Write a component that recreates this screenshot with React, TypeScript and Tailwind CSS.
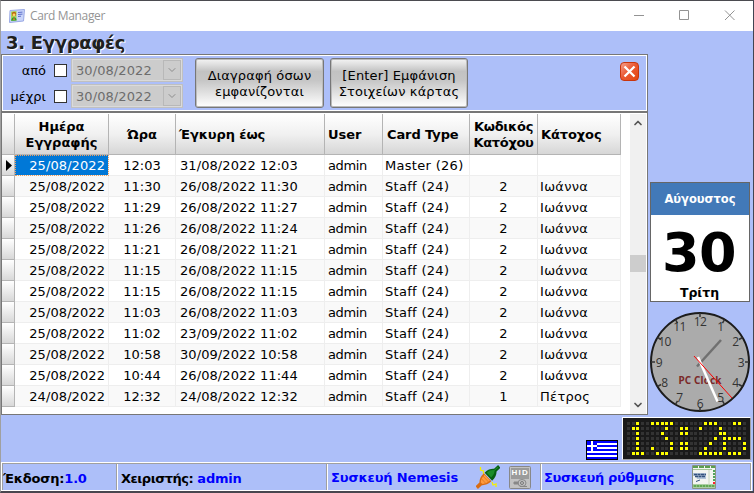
import React, { useState } from "react";
import { ChevronDown, ChevronUp } from "lucide-react";

interface CardRecord {
  date: string;
  time: string;
  validUntil: string;
  user: string;
  cardType: string;
  ownerCode: string;
  owner: string;
}

const records: CardRecord[] = [
  { date: "25/08/2022", time: "12:03", validUntil: "31/08/2022 12:03", user: "admin", cardType: "Master (26)", ownerCode: "", owner: "" },
  { date: "25/08/2022", time: "11:30", validUntil: "26/08/2022 11:30", user: "admin", cardType: "Staff (24)", ownerCode: "2", owner: "Ιωάννα" },
  { date: "25/08/2022", time: "11:29", validUntil: "26/08/2022 11:27", user: "admin", cardType: "Staff (24)", ownerCode: "2", owner: "Ιωάννα" },
  { date: "25/08/2022", time: "11:26", validUntil: "26/08/2022 11:24", user: "admin", cardType: "Staff (24)", ownerCode: "2", owner: "Ιωάννα" },
  { date: "25/08/2022", time: "11:21", validUntil: "26/08/2022 11:21", user: "admin", cardType: "Staff (24)", ownerCode: "2", owner: "Ιωάννα" },
  { date: "25/08/2022", time: "11:15", validUntil: "26/08/2022 11:15", user: "admin", cardType: "Staff (24)", ownerCode: "2", owner: "Ιωάννα" },
  { date: "25/08/2022", time: "11:15", validUntil: "26/08/2022 11:15", user: "admin", cardType: "Staff (24)", ownerCode: "2", owner: "Ιωάννα" },
  { date: "25/08/2022", time: "11:03", validUntil: "26/08/2022 11:03", user: "admin", cardType: "Staff (24)", ownerCode: "2", owner: "Ιωάννα" },
  { date: "25/08/2022", time: "11:02", validUntil: "23/09/2022 11:02", user: "admin", cardType: "Staff (24)", ownerCode: "2", owner: "Ιωάννα" },
  { date: "25/08/2022", time: "10:58", validUntil: "30/09/2022 10:58", user: "admin", cardType: "Staff (24)", ownerCode: "2", owner: "Ιωάννα" },
  { date: "25/08/2022", time: "10:44", validUntil: "26/08/2022 11:44", user: "admin", cardType: "Staff (24)", ownerCode: "2", owner: "Ιωάννα" },
  { date: "24/08/2022", time: "12:32", validUntil: "24/08/2022 12:32", user: "admin", cardType: "Staff (24)", ownerCode: "1", owner: "Πέτρος" }
];

const gridColumns = "grid grid-cols-[13px_94px_67px_149px_58px_87px_68px_83px]";

// 25 x 7 dot matrix reading of the digital clock
const ledRows = [
  "..#..#####......###...##.",
  ".##.....#..##..#...#.....",
  "..#....#...##......##....",
  "..#.....#.........#.####.",
  "..#......#.##....#..#...#",
  "..#..#...#.##...#...#...#",
  ".###..###......#####.###."
];

function AppIcon() {
  return (
    <svg className="w-4 h-[14px]" viewBox="0 0 16 14">
      <path d="M1 1.5 15.5.5 14.5 12 .5 13.5z" fill="#c9d5fa" stroke="#9aa9e4" />
      <path d="M2 2.5 7.5 2v9.5L2 12z" fill="#a8d65a" />
      <circle cx="5" cy="5" r="2.2" fill="#b9690e" />
      <circle cx="5" cy="5.8" r="1.4" fill="#ffd36b" />
      <path d="M2.2 11.7c0-4.6 5.4-4.6 5.4-.3z" fill="#2f9a35" />
      <path d="M5 8l1 3H4z" fill="#f07a20" />
      <path d="M9 3.5l4.5-.4M9 5.5l4.5-.4M9 7.5l3-.3" stroke="#5d6fca" />
    </svg>
  );
}

function TitleBar() {
  return (
    <div className="h-[30px] bg-white flex items-center shrink-0">
      <div className="w-[29px] pl-2">
        <AppIcon />
      </div>
      <span className="font-['Open_Sans',sans-serif] text-[12px] tracking-[-0.35px] leading-none text-[#949494] flex-1">
        Card Manager
      </span>
      <svg className="w-[119px] h-[30px]" viewBox="0 0 119 30" fill="none" stroke="#939393">
        <path d="M0 14.5h10" />
        <path d="M45.5 9.5h9v9h-9z" />
        <path d="M91 9.5l9.5 9.5M100.500 9.500 91 19" />
      </svg>
    </div>
  );
}

function DateFilter({ label }: { label: string }) {
  const [enabled, setEnabled] = useState(false);

  return (
    <div className="h-[26px] flex items-center">
      <span className="w-[43px] text-right leading-none">{label}</span>
      <button
        onClick={() => setEnabled(!enabled)}
        className="w-[13px] h-[13px] ml-2 bg-white border border-[#333333] text-[9px] leading-none"
      >
        {enabled ? "✓" : ""}
      </button>
      <div className="w-[112px] h-6 ml-1 bg-[#cccccc] border border-[#c0c0c0] outline -outline-offset-2 outline-[#dadada] flex items-center text-[#6d6d6d]">
        <span className="flex-1 pl-1 leading-none tracking-[0.08px]">30/08/2022</span>
        <span className="w-[18px] h-5 mr-px border border-[#b8b8b8] flex items-center justify-center shrink-0">
          <ChevronDown className="w-3 h-3 text-[#8c8c8c]" strokeWidth={2} />
        </span>
      </div>
    </div>
  );
}

function GlossButton({ className, children }: { className: string; children: React.ReactNode }) {
  return (
    <button
      className={`h-[50px] pt-px rounded-[3px] border border-[#777777] bg-[linear-gradient(#f4f4f4_0%,#dedede_12%,#c2c2c2_26%,#c6c6c6_45%,#ffffff_100%)] shadow-[inset_0_0_0_1px_#bbbbbb] leading-4 tracking-[0.15px] text-center whitespace-nowrap ${className}`}
    >
      {children}
    </button>
  );
}

function FilterPanel() {
  return (
    <div className="h-[57px] border border-[#777777] border-b-0 shrink-0">
      <div className="h-full border border-white flex">
        <div className="w-[180px] mt-px">
          <DateFilter label="από" />
          <DateFilter label="μέχρι" />
        </div>
        <GlossButton className="w-[129px] ml-3 mt-0.5">
          Διαγραφή όσων
          <br />
          εμφανίζονται
        </GlossButton>
        <GlossButton className="w-[138px] ml-1.5 mt-0.5">
          [Enter] Εμφάνιση
          <br />
          Στοιχείων κάρτας
        </GlossButton>
        <button className="w-[19px] h-[19px] mt-1.5 ml-auto mr-[7px] rounded-sm border border-[#c8350d] bg-[linear-gradient(135deg,#f6a08c,#ea5a35_45%,#e54710)] flex items-center justify-center">
          <svg className="w-[13px] h-[13px]" viewBox="0 0 13 13" stroke="white" strokeWidth="2.3">
            <path d="M1.500 1.500l10 10M11.500 1.500l-10 10" />
          </svg>
        </button>
      </div>
    </div>
  );
}

function HeaderCell({ className = "", children }: { className?: string; children?: React.ReactNode }) {
  return (
    <div className={`border-r border-b border-[#b4b4b4] pt-0.5 flex items-center leading-4 whitespace-nowrap ${className}`}>
      {children}
    </div>
  );
}

function RecordsGrid() {
  const [selected, setSelected] = useState(0);

  return (
    <div className="h-[304px] bg-white border border-t-2 border-[#777777] flex shrink-0">
      <div className="w-[619px] pt-px">
        <div className={`${gridColumns} h-[41px] font-bold bg-[linear-gradient(#ffffff,#f0f0f0_50%,#d5d5d5)]`}>
          <HeaderCell />
          <HeaderCell className="justify-center text-center">
            Ημέρα
            <br />
            Εγγραφής
          </HeaderCell>
          <HeaderCell className="justify-center">Ώρα</HeaderCell>
          <HeaderCell className="pl-[3px] tracking-[-0.1px]">Έγκυρη έως</HeaderCell>
          <HeaderCell className="pl-[3px]">User</HeaderCell>
          <HeaderCell className="pl-1 tracking-[-0.1px]">Card Type</HeaderCell>
          <HeaderCell className="justify-center text-center tracking-[-0.3px]">
            Κωδικός
            <br />
            Κατόχου
          </HeaderCell>
          <HeaderCell className="pl-[3px] tracking-[-0.1px]">Κάτοχος</HeaderCell>
        </div>
        {records.map((record, i) => (
          <div
            key={i}
            onClick={() => setSelected(i)}
            className={`${gridColumns} h-[21px] leading-[18px] whitespace-nowrap *:pt-0.5 *:border-r *:border-b *:border-[#eeeeee] ${
              i % 2 ? "bg-[#f9f9f9]" : "bg-white"
            }`}
          >
            <div className="border-[#b4b4b4]! bg-[linear-gradient(#ffffff,#d8d8d8)] flex items-center pt-0! pl-1">
              {i === selected && (
                <svg className="w-1.5 h-[11px]" viewBox="0 0 6 11">
                  <path d="M0 0l6 5.500L0 11z" />
                </svg>
              )}
            </div>
            <div
              className={`text-right pr-[3px] tracking-[0.08px] ${
                i === selected ? "bg-[#0078d7] text-white outline-1 outline-dotted -outline-offset-1 outline-[#f0a060]" : ""
              }`}
            >
              {record.date}
            </div>
            <div className="text-center">{record.time}</div>
            <div className="pl-1 tracking-[0.08px]">{record.validUntil}</div>
            <div className="pl-[3px] tracking-[-0.4px]">{record.user}</div>
            <div className="pl-0.5 tracking-[0.3px]">{record.cardType}</div>
            <div className="text-center">{record.ownerCode}</div>
            <div className="pl-0.5 tracking-[0.3px]">{record.owner}</div>
          </div>
        ))}
      </div>
      <div className="w-[16px] ml-[9px] mt-px bg-[#f0f0f0] flex flex-col items-center text-[#555555]">
        <ChevronUp className="w-3 h-3 mt-[3px]" strokeWidth={3.5} />
        <div className="w-full h-[17px] mt-[126px] bg-[#cdcdcd]" />
        <ChevronDown className="w-3 h-3 mt-auto mb-[3px]" strokeWidth={3.5} />
      </div>
    </div>
  );
}

function Calendar() {
  return (
    <div className="w-[100px] h-[120px] border border-[#666666] bg-white flex flex-col items-center text-center font-bold shrink-0">
      <div className="w-full h-8 bg-[#4279b8] text-white text-[11.5px] leading-[33px]">Αύγουστος</div>
      <div className="text-[54px] leading-[75px] h-[70px] tracking-[-0.5px] pr-0.5">30</div>
      <div className="text-[12.5px] leading-[15px] pr-px">Τρίτη</div>
    </div>
  );
}

function AnalogClock() {
  const hours = [12, 1, 2, 3, 4, 5, 6, 7, 8, 9, 10, 11];

  return (
    <svg className="w-[102px] h-[102px] shrink-0" viewBox="-51 -51 102 102">
      <circle r="49" fill="#ababab" stroke="#1c1c1c" strokeWidth="2" />
      {hours.map((hour, i) => {
        const angle = (i * Math.PI) / 6;
        const x = Math.sin(angle);
        const y = -Math.cos(angle);
        return (
          <g key={hour}>
            <path d={`M${x * 45} ${y * 45}L${x * 49} ${y * 49}`} stroke="#333333" strokeWidth="1.5" />
            <text
              x={x * 41}
              y={y * 41 + 4.5}
              textAnchor="middle"
              fill="#333333"
              className="font-['Open_Sans',sans-serif] text-[12px] tracking-[-0.5px]"
            >
              {hour}
            </text>
          </g>
        );
      })}
      <text x="-21.500" y="22" fill="#7b2929" className="font-['Noto_Sans',sans-serif] font-bold text-[10px] tracking-[0.1px]">
        PC Clock
      </text>
      <path d="M-3 4.500L21 -22" stroke="#707070" strokeWidth="2.500" />
      <path d="M-2 -5L17.500 39.500" stroke="white" strokeWidth="2.500" />
      <path d="M-6 -6L32 36" stroke="#ff0000" />
    </svg>
  );
}

function LedClock() {
  return (
    <svg className="w-[129px] h-[43px]" viewBox="0 0 129 43">
      <path d="M0 0h129v43H0z" fill="#a0a0a0" />
      <path d="M0 0h129l-1 1H1v41l-1 1z" fill="white" />
      <path d="M1 1h127v41H1z" fill="#1a1a1a" />
      {ledRows.map((row, y) =>
        row.split("").map((dot, x) => (
          <rect
            key={`${x}-${y}`}
            x={Math.round(4.8 + x * 4.83)}
            y={5 + y * 5}
            width="3"
            height="3"
            fill={dot === "#" ? "#ffff00" : "#333333"}
          />
        ))
      )}
    </svg>
  );
}

function GreekFlag() {
  return (
    <svg className="w-8 h-5" viewBox="0 0 32 20">
      <path d="M0 0h32v20H0z" />
      <path d="M1 1h30v18H1z" fill="#0000ff" />
      <path d="M11 4h20M11 8h20M1 12h30M1 16h30" stroke="white" strokeWidth="2" />
      <path d="M1 6h10M6 1v10" stroke="white" strokeWidth="2" />
    </svg>
  );
}

function PlugIcon() {
  return (
    <svg className="w-6 h-6" viewBox="0 0 24 24">
      <path d="M4.500 2v3l3 1v3M16 17l1 3 3-1v3" fill="none" stroke="#f5f000" strokeWidth="1.3" />
      <g transform="translate(12 12) rotate(-43)">
        <path d="M-.5-5.500C-5-5.500-8-4-10-1.800h-5.500v3.600H-10C-8 4-5 5.500-.5 5.500z" fill="#d96b12" />
        <path d="M-1-4c-3 0-6 1-8 3v2c2 2 4 3 8 3z" fill="#ff9a3d" />
        <path d="M.5-5.500C5-5.500 8-4 10-1.800h5.500v3.600H10C8 4 5 5.500 .5 5.500z" fill="#075f14" />
        <path d="M2-4c3 0 5 1 7 3h5v1H9C7 2 5 2.500 2 2.500z" fill="#1a8c2a" />
        <path d="M-3-4.500v9M-6-3.500v7" stroke="#d97a25" strokeWidth=".8" />
      </g>
    </svg>
  );
}

function HidIcon() {
  return (
    <svg className="w-[22px] h-[23px]" viewBox="0 0 22 23">
      <rect x=".5" y=".5" width="21" height="22" rx="1" fill="#c2c2c2" stroke="#888888" />
      <path d="M2 2h18v11H2z" fill="#9b9b9b" />
      <text x="2.500" y="9" fill="white" className="font-['Liberation_Sans',sans-serif] font-bold text-[8px] tracking-[1.2px]">
        HID
      </text>
      <ellipse cx="13" cy="17" rx="4" ry="3.500" fill="none" stroke="#888888" />
      <circle cx="13" cy="17" r="1.500" fill="none" stroke="#777777" />
      <path d="M5 16h4v2H5zM11 20.500h7" fill="#888888" stroke="#888888" />
    </svg>
  );
}

function ControllerIcon() {
  return (
    <svg className="w-6 h-6" viewBox="0 0 24 24">
      <path d="M.5.5h23v23H.5z" fill="#f3f5f1" stroke="#8a9483" />
      <path d="M1 2h22" stroke="#5b9f4f" strokeWidth="2" strokeDasharray="5 1" />
      <path d="M1 4.500h19" stroke="#a4c497" />
      <path d="M1 21h22" stroke="#61a854" strokeWidth="3" />
      <path d="M1 21h22" stroke="#b4d5aa" strokeDasharray="1 2" />
      <path d="M1 8h13v6H5l-1-3H1z" fill="#b1c3d8" />
      <path d="M2 9.500h12M3 11.500h10" stroke="#35527e" strokeWidth="1.500" strokeDasharray="3 .5" />
      <path d="M8 15l-4 1.500" stroke="#35527e" />
      <path d="M17 5v15" stroke="#c8d7be" />
      <path d="M22 5v12" stroke="#50a55a" strokeWidth="2" strokeDasharray="2 1" />
      <path d="M21 17h2v2h-2z" fill="#ff2030" />
    </svg>
  );
}

function StatusBar() {
  return (
    <div className="h-[29px] mr-px border border-white font-bold shrink-0">
      <div className="h-full border border-b-0 border-[#a0a0a0] flex items-stretch leading-[29px] whitespace-nowrap">
        <div className="w-[114px] border-r border-[#a0a0a0] tracking-[-0.2px]">
          Έκδοση:<span className="text-[#0000ff]">1.0</span>
        </div>
        <div className="w-[210px] pl-[3px] border-l border-l-white border-r border-r-[#a0a0a0]">
          <span className="tracking-[-0.5px]">Χειριστής: </span>
          <span className="text-[#0000ff] tracking-[-0.2px]">admin</span>
        </div>
        <div className="w-[214px] pl-[3px] border-l border-l-white border-r border-r-[#a0a0a0] text-[#0000ff] flex items-center">
          <span className="w-[145px] tracking-[-0.12px]">Συσκευή Nemesis</span>
          <PlugIcon />
          <span className="ml-[9px]">
            <HidIcon />
          </span>
        </div>
        <div className="flex-1 pl-0.5 border-l border-l-white text-[#0000ff] flex items-center">
          <span className="w-[148px] tracking-[-0.35px]">Συσκευή ρύθμισης</span>
          <ControllerIcon />
        </div>
      </div>
    </div>
  );
}

export default function App() {
  return (
    <div className="w-[754px] h-[493px] flex flex-col bg-[#adbff9] border-t border-t-[#4b4b50] border-l border-l-[#a0a0a0] border-r border-r-[#404552] border-b-2 border-b-[#48464e] font-['DejaVu_Sans',Verdana,sans-serif] text-[13px] text-black overflow-hidden select-none">
      <TitleBar />
      <div className="h-[431px] flex shrink-0">
        <div className="w-[585px] flex flex-col">
          <h1 className="h-[23px] pl-[5px] text-[18px] leading-[23px] tracking-[-0.3px] font-bold text-[#202020] [text-shadow:1px_1px_0_white]">
            3. Εγγραφές
          </h1>
          <div className="w-[647px]">
            <FilterPanel />
            <RecordsGrid />
          </div>
          <div className="flex justify-end pt-[25px] w-[617px]">
            <GreekFlag />
          </div>
        </div>
        <div className="w-[167px] flex flex-col items-end">
          <div className="w-[103px] flex flex-col items-start pt-[151px] h-[386px]">
            <Calendar />
            <div className="-ml-px mt-[9px]">
              <AnalogClock />
            </div>
          </div>
          <div className="pr-0.5">
            <LedClock />
          </div>
        </div>
      </div>
      <StatusBar />
    </div>
  );
}
